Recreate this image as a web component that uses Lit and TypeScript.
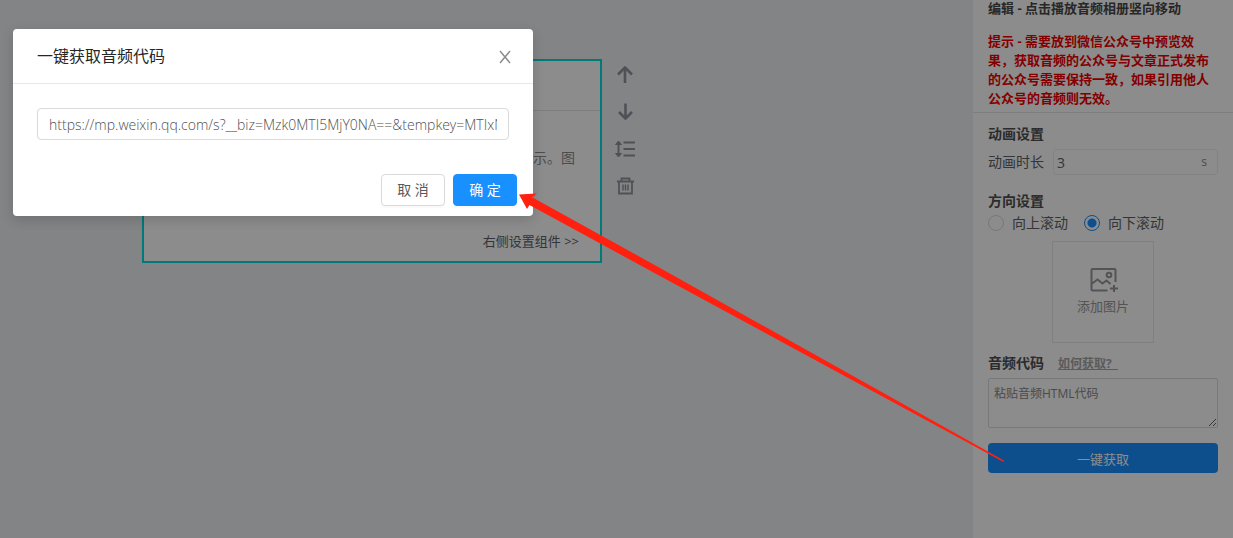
import { LitElement, html, css, svg } from "lit";
import { customElement, property, state } from "lit/decorators.js";

const fontStack = css`"Open Sans", "Noto Sans CJK SC", sans-serif`;

@customElement("editor-canvas")
class EditorCanvas extends LitElement {
  static styles = css`
    :host { display: block; flex: 1; min-width: 0; }
    .row { display: flex; align-items: flex-start; gap: 10px; padding: 59px 24px 24px 142px; }
    .card {
      box-sizing: border-box; flex: 0 1 460px; border: 2px solid #00dcdc; background: #fff;
      display: flex; flex-direction: column; height: 204px; text-align: right;
    }
    .head { height: 49px; border-bottom: 1px solid #e4e4e4; }
    .body { flex: 1; padding: 36px 25px 0; font-size: 14px; line-height: 22px; color: #8c8c8c; }
    .foot { padding: 0 21px 10px; font-size: 13px; line-height: 20px; color: #606266; }
    .tools { display: flex; flex-direction: column; gap: 13px; padding-top: 4px; }
    button { border: 0; padding: 0; background: none; color: #8f959e; width: 24px; height: 24px; }
    svg { display: block; fill: none; stroke: currentColor; }
  `;

  tool(label: string, shape: unknown) {
    return html`<button type="button" aria-label=${label}>
      <svg width="24" height="24" viewBox="0 0 24 24" stroke-width="2">${shape}</svg>
    </button>`;
  }

  render() {
    return html`
      <div class="row">
        <section class="card">
          <div class="head"></div>
          <div class="body">示。图</div>
          <div class="foot">右侧设置组件 &gt;&gt;</div>
        </section>
        <nav class="tools">
          ${this.tool("上移", svg`<path stroke-width="2.600" stroke-linejoin="round" d="M13 20V5M6 11.500l7-7 7 7"/>`)}
          ${this.tool("下移", svg`<path stroke-width="2.600" stroke-linejoin="round" d="M13.500 3.500v15M7 12l6.500 6.500L20 12"/>`)}
          ${this.tool("行距", svg`<path d="M6.500 5v14M11.500 5.500H23M11.500 12H23M11.500 18.500H23"/><path fill="currentColor" stroke-width="1" d="M3.500 7.500l3-3.500 3 3.500zM3.500 16.500l3 3.500 3-3.500z"/>`)}
          ${this.tool("删除", svg`<path stroke-width="1.800" d="M5 7.500h17M7 7.500v12h13v-12M9.500 7V4.500h8V7"/><path stroke-width="1.500" d="M11 10.500v6M13.500 10.500v6M16 10.500v6"/>`)}
        </nav>
      </div>
    `;
  }
}

@customElement("settings-panel")
class SettingsPanel extends LitElement {
  @state() direction = "down";

  static styles = css`
    :host {
      display: block; box-sizing: border-box; flex: 0 0 260px; background: #fff;
      font-size: 14px; color: #606266;
    }
    * { box-sizing: border-box; }
    h1, h2, p { margin: 0; }
    input, textarea, button { font-family: inherit; }
    .intro { padding: 0 15px 4px; border-bottom: 1px solid #e4e4e4; font-size: 13px; line-height: 19px; font-weight: 700; }
    h1 { font-size: 13px; line-height: 17px; padding-bottom: 15px; color: #484848; }
    .hint { color: #f00000; }
    .form { padding: 10px 15px 0; }
    h2 { font-size: 14px; line-height: 22px; font-weight: 600; color: #505050; }
    .duration { display: flex; align-items: center; gap: 9px; padding: 4px 0 15px; line-height: 26px; }
    .number { flex: 1; min-width: 0; display: flex; height: 26px; border: 1px solid #efefef; border-radius: 3px; padding: 0 10px 0 3px; line-height: 23px; font-size: 12px; color: #888; }
    .number input { flex: 1; min-width: 0; border: 0; padding: 0; background: none; font-size: 14px; color: #606266; outline: 0; }
    .radios { display: flex; gap: 16px; line-height: 22px; }
    .radios label { display: flex; align-items: center; gap: 8px; }
    .radios input { appearance: none; margin: 0; width: 16px; height: 16px; border: 1px solid #d9d9d9; border-radius: 50%; }
    .radios input:checked { border-color: #1890ff; background: radial-gradient(circle, #1890ff 4px, transparent 5px); }
    .add {
      display: flex; flex-direction: column; align-items: center; gap: 3px; width: 102px; height: 102px;
      margin: 7px 0 9px 64px; padding: 25px 0 0; background: none; border: 1px solid #e8e8e8; color: #999;
      font-size: 13px; line-height: 20px;
    }
    .code { display: flex; align-items: center; gap: 14px; }
    .code a { font-size: 12px; font-weight: 700; color: #a6a6a6; white-space: pre; }
    textarea { display: block; width: 100%; height: 50px; margin: 4px 0 15px; padding: 6px 5px; border: 1px solid #ddd; border-radius: 2px; background: none; font-size: 12px; line-height: 18px; outline: 0; }
    textarea::placeholder { color: #888; }
    .fetch { width: 100%; height: 30px; border: 0; border-radius: 4px; background: #1890ff; color: #fff; font-size: 13px; }
  `;

  option(value: string, label: string) {
    return html`<label><input type="radio" name="direction" .checked=${this.direction === value}
      @change=${() => (this.direction = value)} />${label}</label>`;
  }

  render() {
    return html`
      <header class="intro">
        <h1>编辑 - 点击播放音频相册竖向移动</h1>
        <p class="hint">提示 - 需要放到微信公众号中预览效果，获取音频的公众号与文章正式发布的公众号需要保持一致，如果引用他人公众号的音频则无效。</p>
      </header>
      <div class="form">
        <h2>动画设置</h2>
        <div class="duration">
          <label for="duration">动画时长</label>
          <div class="number"><input id="duration" value="3" /><span>s</span></div>
        </div>
        <h2>方向设置</h2>
        <div class="radios">${this.option("up", "向上滚动")}${this.option("down", "向下滚动")}</div>
        <button class="add" type="button">
          <svg width="30" height="26" viewBox="0 0 30 26" fill="none" stroke="currentColor" stroke-width="2">
            <path d="M19.500 23.500H4.500a1 1 0 0 1-1-1V3a1 1 0 0 1 1-1H26.500a1 1 0 0 1 1 1v12M3.500 17l6-4.500 5 4 4-3 4 3.500M26 18v7M22 21.500h8"/>
            <circle cx="21" cy="8" r="2.300"/>
          </svg>
          添加图片
        </button>
        <div class="code"><h2><label for="code">音频代码</label></h2><a href="#help">如何获取?  </a></div>
        <textarea id="code" placeholder="粘贴音频HTML代码"></textarea>
        <button class="fetch" type="button">一键获取</button>
      </div>
    `;
  }
}

@customElement("fetch-dialog")
class FetchDialog extends LitElement {
  @property() url = "";

  static styles = css`
    :host { display: block; }
    * { box-sizing: border-box; }
    .dialog { width: min(520px, 100%); background: #fff; border-radius: 4px; box-shadow: 0 4px 12px rgba(0, 0, 0, 0.15); }
    header { display: flex; align-items: center; justify-content: space-between; padding: 16px 20px 16px 24px; border-bottom: 1px solid #e8e8e8; }
    h1 { margin: 0; font-size: 16px; line-height: 22px; font-weight: 400; color: #262626; }
    button, input { font-family: inherit; font-size: 14px; }
    .close { border: 0; padding: 0; width: 16px; height: 16px; background: none; color: #8c8c8c; }
    .close svg { display: block; }
    .content { padding: 24px 24px 34px; }
    input { display: block; width: 100%; height: 32px; padding: 4px 11px; border: 1px solid #d9d9d9; border-radius: 4px; font-weight: 350; color: #505050; outline: 0; }
    footer { display: flex; justify-content: flex-end; gap: 8px; padding: 0 16px 10px; }
    .action { width: 64px; height: 32px; padding: 0 0 2px; border: 1px solid #d9d9d9; border-radius: 4px; background: #fff; color: #595959; box-shadow: 0 2px 0 rgba(0, 0, 0, 0.02); }
    .primary { border-color: #1890ff; background: #1890ff; color: #fff; }
  `;

  render() {
    return html`
      <div class="dialog" role="dialog" aria-labelledby="title">
        <header>
          <h1 id="title">一键获取音频代码</h1>
          <button class="close" type="button" aria-label="关闭">
            <svg width="16" height="16" viewBox="0 0 16 16" fill="none" stroke="currentColor" stroke-width="1.500">
              <path d="M3 3l10 12M13 3L3 15" />
            </svg>
          </button>
        </header>
        <div class="content"><input aria-label="音频链接" .value=${this.url} /></div>
        <footer>
          <button class="action" type="button">取 消</button>
          <button class="action primary" type="button">确 定</button>
        </footer>
      </div>
    `;
  }
}

@customElement("app-root")
class AppRoot extends LitElement {
  static styles = css`
    :host { display: block; position: relative; min-height: 100vh; font-family: ${fontStack}; background: #eef0f2; overflow: hidden; }
    .page { display: flex; min-height: 100vh; }
    .mask { position: absolute; inset: 0; padding: 29px 13px; background: rgba(0, 0, 0, 0.45); }
    .pointer { position: absolute; left: 518px; top: 192px; pointer-events: none; }
  `;

  render() {
    return html`
      <div class="page">
        <editor-canvas></editor-canvas>
        <settings-panel></settings-panel>
      </div>
      <div class="mask">
        <fetch-dialog url="https://mp.weixin.qq.com/s?__biz=Mzk0MTI5MjY0NA==&tempkey=MTIxNA"></fetch-dialog>
      </div>
      <svg class="pointer" width="488" height="272" viewBox="0 0 488 272" aria-hidden="true">
        <path fill="#ff2010" d="M1 2.500L18.500 1.500L14.500 5.500L142 76L486 268.500L485.500 270L142 84L11.500 13L9 17Z" />
      </svg>
    `;
  }
}
